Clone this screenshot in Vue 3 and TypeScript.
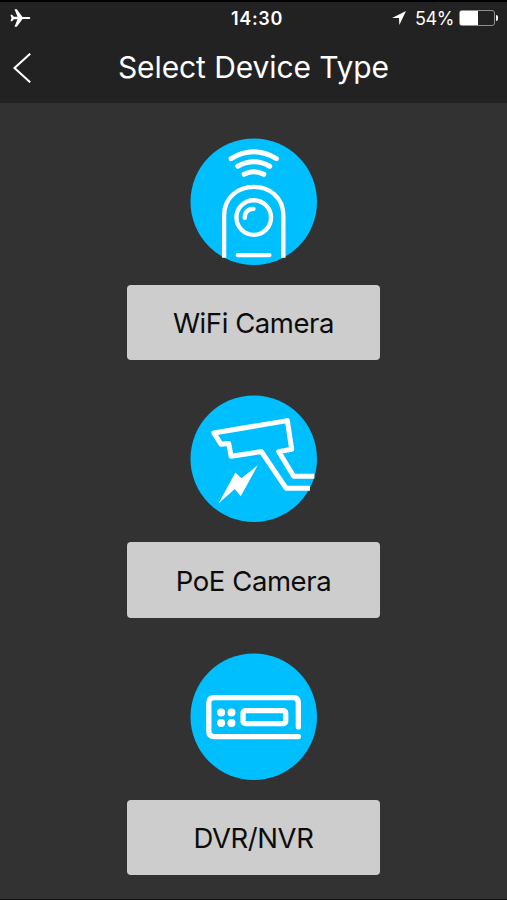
<script setup lang="ts">
interface DeviceType {
  id: 'wifi' | 'poe' | 'recorder'
  label: string
}

const devices: DeviceType[] = [
  { id: 'wifi', label: 'WiFi Camera' },
  { id: 'poe', label: 'PoE Camera' },
  { id: 'recorder', label: 'DVR/NVR' },
]

const battery = 54
</script>

<template>
  <div class="screen">
    <header class="header">
      <div class="status">
        <svg class="plane" viewBox="0 0 60 54" aria-hidden="true">
          <path d="M57 24 Q62 27 57 30 H36 L19 53 H12 L21 31 H10 L5 37 H0 L3 27 L0 17 H5 L10 23 H21 L12 1 H19 L36 24Z" />
        </svg>
        <span class="time">14:30</span>
        <div class="power">
          <svg class="arrow" viewBox="0 0 40 40" aria-hidden="true">
            <path d="M40 0 L21 40 L20 20 L0 20Z" />
          </svg>
          <span class="percent">{{ battery }}%</span>
          <span class="battery"><span class="charge" :style="{ width: battery + '%' }"></span></span>
          <span class="tip"></span>
        </div>
      </div>
      <nav class="nav">
        <button class="back" aria-label="Back">
          <svg viewBox="0 0 52 88" aria-hidden="true"><path d="M50 2 L4 44 L50 86" /></svg>
        </button>
        <h1 class="title">Select Device Type</h1>
      </nav>
    </header>

    <main class="list">
      <section v-for="device in devices" :key="device.id" class="device">
        <svg class="icon" viewBox="18.5 17 383 383" aria-hidden="true">
          <circle class="disc" cx="210" cy="208.5" r="190" />
          <g v-if="device.id === 'wifi'" class="line">
            <path class="waves" d="M142 79 Q210 38 278 79 M162 102 Q210 75 258 102 M181 126 Q210 111 240 126" />
            <path class="butt" d="M121 377 V250 C121 135 299 135 299 250 V377" />
            <circle cx="210" cy="256" r="52" />
            <path d="M183 257 Q183 231 209 230 M162 369 H257" />
          </g>
          <g v-else-if="device.id === 'poe'" class="line cctv">
            <path d="M392 261 H330 L285 187 L324 180 L311 94 L90 131 L112 165 L135 163 L142 201 L233 187 L307 297 H379" />
            <path class="bolt" d="M222 228 L171 321 L153 299 L104 343 L155 250 L173 267Z" />
          </g>
          <g v-else class="line recorder">
            <path d="M344 239 V166 Q344 151 329 151 H91 Q75 151 75 167 V251 Q75 268 92 268 H344" />
            <rect x="178" y="190" width="128" height="39" rx="7" />
            <g class="dots">
              <circle cx="112" cy="196" r="12" />
              <circle cx="143" cy="196" r="12" />
              <circle cx="112" cy="227" r="12" />
              <circle cx="143" cy="227" r="12" />
            </g>
          </g>
        </svg>
        <button class="choice"><span>{{ device.label }}</span></button>
      </section>
    </main>
  </div>
</template>

<style>
body {
  margin: 0;
  background: #323232;
}
</style>

<style scoped>
.screen {
  box-sizing: border-box;
  width: 507px;
  height: 900px;
  overflow: hidden;
  background: #323232;
  border-top: 2px solid #000;
  border-bottom: 1px solid #111;
  font-family: Inter, "Liberation Sans", sans-serif;
}

.header {
  height: 101px;
  background: #222;
  color: #fff;
}

.status {
  display: grid;
  grid-template-columns: 1fr auto 1fr;
  align-items: center;
  height: 32px;
  padding: 0 9px 0 10px;
}

.plane {
  width: 21px;
  height: 18px;
  margin-top: -1px;
  fill: #fff;
}

.time {
  padding-left: 6px;
  font-size: 18px;
  font-weight: 600;
  letter-spacing: 0.7px;
}

.power {
  display: flex;
  align-items: center;
  justify-content: flex-end;
}

.arrow {
  width: 14px;
  height: 14px;
  margin-right: 9px;
  fill: #fff;
}

.percent {
  margin-right: 5px;
  font-size: 18px;
  letter-spacing: -0.4px;
}

.battery {
  box-sizing: border-box;
  width: 36px;
  height: 16px;
  border: 1px solid #909090;
  border-radius: 3px;
}

.charge {
  display: block;
  height: 100%;
  border-radius: 1px 0 0 1px;
  background: #fff;
}

.tip {
  width: 2px;
  height: 6px;
  margin-left: 1px;
  border-radius: 0 3px 3px 0;
  background: #fff;
}

.nav {
  display: grid;
  grid-template-columns: 60px 1fr 60px;
  align-items: center;
  height: 66px;
}

.back {
  display: flex;
  padding: 2px 0 0 13px;
  border: 0;
  background: none;
}

.back svg {
  width: 18px;
  height: 30px;
  fill: none;
  stroke: #fff;
  stroke-width: 6;
}

.title {
  margin: 0;
  font-size: 30px;
  font-weight: 400;
  letter-spacing: -0.1px;
  text-align: center;
  white-space: nowrap;
}

.list {
  display: flex;
  flex-direction: column;
  align-items: center;
  gap: 35px;
  padding-top: 34.9px;
}

.device {
  display: flex;
  flex-direction: column;
  align-items: center;
  gap: 19.5px;
}

.icon {
  width: 127.5px;
  height: 127.5px;
  margin-left: 1px;
}

.disc {
  fill: #00bfff;
}

.line {
  fill: none;
  stroke: #fff;
  stroke-width: 13;
  stroke-linecap: round;
  stroke-linejoin: round;
}

.waves {
  stroke-width: 15;
}

.line .butt {
  stroke-linecap: butt;
}

.cctv {
  stroke-width: 15;
  stroke-linecap: butt;
}

.recorder {
  stroke-width: 16;
}

.bolt,
.dots {
  fill: #fff;
  stroke: none;
}

.choice {
  width: 253px;
  height: 75.5px;
  padding: 1px 0 0;
  border: 0;
  border-radius: 4px;
  background: #cdcdcd;
  color: #0c0c0c;
  font: 400 27.5px/74px Inter, "Liberation Sans", sans-serif;
  letter-spacing: -0.43px;
}
</style>
